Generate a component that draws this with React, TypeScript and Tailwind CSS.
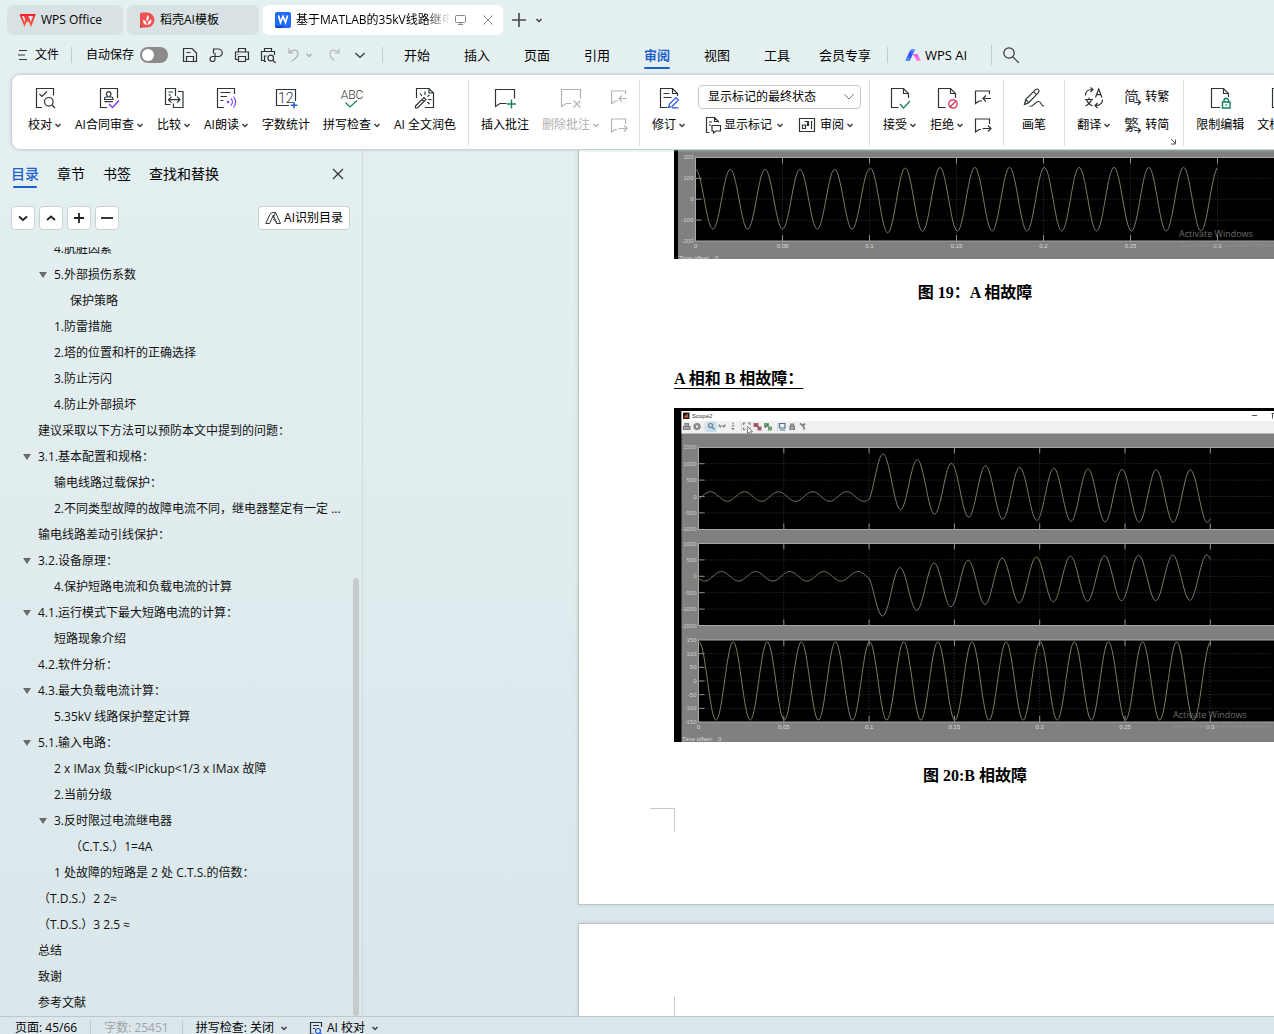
import type { ReactNode } from "react";

type Kids = { children?: ReactNode };

const INK = "#2f3437";
const PALE = "#b4b4b4";

function Ico({ size = 24, color = INK, children }: Kids & { size?: number; color?: string }) {
  return (
    <svg
      width={size}
      height={size}
      viewBox={`0 0 ${size} ${size}`}
      fill="none"
      stroke={color}
      strokeWidth={1.2}
      className="block shrink-0"
      aria-hidden="true"
    >
      {children}
    </svg>
  );
}

function Chevron({ color = "#3a3f42" }: { color?: string }) {
  return (
    <svg width="8" height="8" viewBox="0 0 8 8" fill="none" stroke={color} strokeWidth="1.5" className="ml-0.5 shrink-0" aria-hidden="true">
      <path d="M1.5 3L4 5.500L6.500 3" />
    </svg>
  );
}

/* ---------- ribbon icons ---------- */

const ProofIcon = () => (
  <Ico>
    <path d="M9 21.500H3.500V2.500H20.500V9.500M6.500 8l2.500 2.500 5-5" />
    <circle cx="15.800" cy="15.800" r="4.300" />
    <path d="M19 19l3 3" />
  </Ico>
);
const ContractIcon = () => (
  <Ico>
    <path d="M10 21.500H3.500V2.500H20.500V12" />
    <path d="M10.600 11c0-1.400-1.200-1.800-1.200-3.100a2.300 2.300 0 014.600 0c0 1.300-1.200 1.700-1.200 3.100M7.500 13.500v-1c0-.9.600-1.500 1.500-1.500h5.400c.9 0 1.500.6 1.500 1.500v1zM7.500 15.700h8.400" />
    <path d="M12 18l3.500 3.500 6.500-7" stroke="#7a3ff2" strokeWidth={1.500} />
  </Ico>
);
const CompareIcon = () => (
  <Ico>
    <path d="M8.500 18.500H3.500V2.500H13.500V10M6.500 6h4.500M6.500 9h2.500M16 5.500H21V21.500H11.500V17.500" />
    <path d="M6.500 13.700h11.500M9.500 10.700l-3 3 3 3M15 10.700l3 3-3 3" />
  </Ico>
);
const ReadIcon = () => (
  <Ico>
    <path d="M10 21.500H3.500V2.500H20.500V8M6.500 6.500h10M6.500 10.500h6.500M6.500 14.500h3" />
    <circle cx="14" cy="16" r="1.300" fill="#7a3ff2" stroke="none" />
    <path d="M17 12.500c1.800 2 1.800 5 0 7M19.500 10.500c2.600 3.300 2.600 7.700 0 11" stroke="#7a3ff2" />
  </Ico>
);
const CountIcon = () => (
  <Ico>
    <path d="M15 19.500H2.500V3.500H21.500V15" />
    <text x="11.800" y="16.500" fontSize="14" textAnchor="middle" fill={INK} stroke="none" fontWeight="300" fontFamily="Roboto, sans-serif">12</text>
    <path d="M20 16v6.500M16.800 19.200h6.500" stroke="#2357d8" strokeWidth={1.400} />
  </Ico>
);
const SpellIcon = () => (
  <Ico>
    <text x="12" y="12.500" fontSize="12" textAnchor="middle" fill={INK} stroke="none" fontWeight="300" fontFamily="Roboto, sans-serif">ABC</text>
    <path d="M5.500 16.500l4.500 4.500 7-6.500" stroke="#128060" />
  </Ico>
);
const PolishIcon = () => (
  <Ico>
    <path d="M3.500 12V2.500H16L20.500 7V21.500H12M16 2.500V7H20.500" />
    <path d="M2.500 20l8.500-8.500 2 2-8.500 8.500h-2zM9 13.500l2 2M12 5.500v3.500M7 7.500l2 2.500M16.500 9l-2 1.500M15 13.500h3.500M14.500 16l2 2" />
  </Ico>
);
const AddCommentIcon = () => (
  <Ico>
    <path d="M13.500 17.500H7l-4.500 3V3.500H21.500V12.500" />
    <path d="M18.500 13.500v9M14 18h9" stroke="#128060" strokeWidth={1.400} />
  </Ico>
);
const DeleteCommentIcon = () => (
  <Ico color={PALE}>
    <path d="M12.500 17.500H7l-4.500 3V3.500H21.500V12.500M14.500 14.500l7 7M21.500 14.500l-7 7" />
  </Ico>
);
const PrevIcon = ({ color = INK }: { color?: string }) => (
  <Ico size={18} color={color}>
    <path d="M8 13H5l-3.500 2.500V3H15.500V6M17 10.500H9M12 7.500l-3 3 3 3" />
  </Ico>
);
const NextIcon = ({ color = INK }: { color?: string }) => (
  <Ico size={18} color={color}>
    <path d="M7 13.500H5l-3.500 2.500V3H15.500V8M8.500 12.500H17M14 9.500l3 3-3 3" />
  </Ico>
);
const ReviseIcon = () => (
  <Ico>
    <path d="M10.500 21.500H3.500V2.500H15.500L20.500 7.500V10M15.500 2.500V7.500H20.500M6.500 7.500h6M6.500 11.500h8" />
    <path d="M11.500 21.500l1-3.500 6.500-6.500 2.500 2.500-6.500 6.500zM15 21.800h6.500" stroke="#2357d8" />
  </Ico>
);
const MarkupIcon = () => (
  <Ico size={18}>
    <path d="M5.500 16.500H2.500V1.500H10.500L14.500 5.500V6.500M10.500 1.500V5.500H14M5 6h3M5 9h2M8 9.500h8.500v5.500h-4.500l-2.500 2v-2H8z" />
  </Ico>
);
const PaneIcon = () => (
  <Ico size={18}>
    <path d="M1.500 2.500h15v13h-15zM13.500 5v8M4.500 9h3v3.500h-3zM9.500 5.500V9M6.500 5.500h4v4h-2" />
  </Ico>
);
const AcceptIcon = () => (
  <Ico>
    <path d="M10.500 21.500H3.500V2.500H15.500L20.500 7.500V12M15.500 2.500V7.500H20.500" />
    <path d="M12 18l3.500 4 6.500-7" stroke="#128060" />
  </Ico>
);
const RejectIcon = () => (
  <Ico>
    <path d="M10.500 21.500H3.500V2.500H15.500L20.500 7.500V12M15.500 2.500V7.500H20.500" />
    <path d="M15 21l6-6M22.200 18a4.200 4.200 0 11-8.400 0a4.200 4.200 0 018.400 0z" stroke="#cf2850" />
  </Ico>
);
const PenIcon = () => (
  <Ico>
    <path d="M2.500 18.500l1.200-5L13.500 3.700a2 2 0 012.900 2.900L6.700 16.700zM3.700 13.500l3 3.200M11.500 5.700l3 3M7.500 20.500c5 0 5.500-5 9-5s1.500 4.500 5.500 4.500" />
  </Ico>
);
const TranslateIcon = () => (
  <Ico>
    <path d="M3.500 9.500c0-4 2.500-6 7-6M8.500 1.500l2.500 2-2.500 2.500M20.500 13.500c0 4-2.500 6-7 6M15.500 17l-2.500 2.500 2.500 2.500" />
    <path d="M13.500 11.500l3.200-8.500 3.200 8.500M14.600 8.700h4.200M3 13.500h8M7 11.500v2M9.500 13.500c-1 3-3 5-6 6.500M4.500 13.500c1 3 3 5 6 6.500" />
  </Ico>
);
const GlyphIcon = ({ glyph }: { glyph: string }) => (
  <Ico size={18}>
    <text x="0" y="14" fontSize="15" fill={INK} stroke="none" fontFamily='"Noto Sans CJK SC", sans-serif'>{glyph}</text>
    <path d="M10.500 14.500H16.500M14 12l2.500 2.500-2.500 2.500" stroke="white" strokeWidth={3.500} />
    <path d="M10.500 14.500H16.500M14 12l2.500 2.500-2.500 2.500" />
  </Ico>
);
const LockIcon = () => (
  <Ico>
    <path d="M12 21.500H3.500V2.500H15.500L20.500 7.500V11M15.500 2.500V7.500H20.500" />
    <path d="M14.500 16h7.500v6h-7.500zM16 16v-1.500a2.200 2.200 0 014.500 0v1.500M18.200 18.300v1.500" stroke="#128060" strokeWidth={1.400} />
  </Ico>
);
const DocIcon = () => (
  <Ico>
    <path d="M10.500 21.500H3.500V2.500H15.500L20.500 7.500V12M15.500 2.500V7.500H20.500" />
  </Ico>
);

/* ---------- ribbon parts ---------- */

function Big({ icon, label, menu, disabled }: { icon: ReactNode; label: string; menu?: boolean; disabled?: boolean }) {
  return (
    <button type="button" disabled={disabled} className="flex shrink-0 flex-col items-center gap-[7px] text-black disabled:text-[#b0b0b0]">
      {icon}
      <span className="flex items-center whitespace-nowrap leading-4">
        {label}
        {menu && <Chevron color={disabled ? PALE : undefined} />}
      </span>
    </button>
  );
}

const Sep = () => <div className="-mx-px -mt-1.5 h-[66px] w-px shrink-0 bg-[#d9dcdd]" />;

const Stack = ({ children }: Kids) => <div className="-ml-[3px] -mr-px flex shrink-0 flex-col gap-2.5 pt-0.5">{children}</div>;

function IconButton({ label, disabled, children }: Kids & { label: string; disabled?: boolean }) {
  return (
    <button type="button" aria-label={label} disabled={disabled} className="flex shrink-0 items-center justify-center">
      {children}
    </button>
  );
}

function Ribbon() {
  return (
    <div className="relative z-10 mb-px ml-3 flex h-[74px] shrink-0 items-start gap-[13px] overflow-hidden rounded-l-lg bg-white pl-4 pt-[11px] shadow-[0_0_3px_1px_#b9c7c9]">
      <Big icon={<ProofIcon />} label="校对" menu />
      <Big icon={<ContractIcon />} label="AI合同审查" menu />
      <Big icon={<CompareIcon />} label="比较" menu />
      <Big icon={<ReadIcon />} label="AI朗读" menu />
      <Big icon={<CountIcon />} label="字数统计" />
      <Big icon={<SpellIcon />} label="拼写检查" menu />
      <Big icon={<PolishIcon />} label="AI 全文润色" />
      <Sep />
      <Big icon={<AddCommentIcon />} label="插入批注" />
      <Big icon={<DeleteCommentIcon />} label="删除批注" menu disabled />
      <Stack>
        <IconButton label="上一条批注" disabled><PrevIcon color={PALE} /></IconButton>
        <IconButton label="下一条批注" disabled><NextIcon color={PALE} /></IconButton>
      </Stack>
      <Sep />
      <Big icon={<ReviseIcon />} label="修订" menu />
      <div className="-ml-px -mt-px flex shrink-0 flex-col gap-[7px]">
        <label className="relative flex">
          <span className="sr-only">显示状态</span>
          <select className="h-6 w-[163px] appearance-none rounded border border-[#c4c8ca] bg-white pl-[9px] text-xs leading-4 text-black">
            <option>显示标记的最终状态</option>
          </select>
          <svg width="12" height="8" viewBox="0 0 12 8" fill="none" stroke="#6b7072" className="pointer-events-none absolute right-1.5 top-2" aria-hidden="true">
            <path d="M1.500 1.500L6 6L10.500 1.500" />
          </svg>
        </label>
        <div className="flex gap-3.5 pl-1.5">
          <button type="button" className="flex items-center gap-0.5 leading-[18px]">
            <MarkupIcon />
            <span className="flex items-center">显示标记<span className="w-0.5" /><Chevron /></span>
          </button>
          <button type="button" className="flex items-center gap-1 leading-[18px]">
            <PaneIcon />
            <span className="flex items-center">审阅<Chevron /></span>
          </button>
        </div>
      </div>
      <div className="-ml-1"><Sep /></div>
      <Big icon={<AcceptIcon />} label="接受" menu />
      <Big icon={<RejectIcon />} label="拒绝" menu />
      <Stack>
        <IconButton label="上一条修订"><PrevIcon /></IconButton>
        <IconButton label="下一条修订"><NextIcon /></IconButton>
      </Stack>
      <Sep />
      <div className="px-1.5"><Big icon={<PenIcon />} label="画笔" /></div>
      <Sep />
      <Big icon={<TranslateIcon />} label="翻译" menu />
      <div className="flex shrink-0 flex-col gap-2.5 pt-0.5">
        <button type="button" className="flex items-center gap-[3px] leading-[18px]"><GlyphIcon glyph="简" />转繁</button>
        <button type="button" className="flex items-center gap-[3px] leading-[18px]"><GlyphIcon glyph="繁" />转简</button>
      </div>
      <div className="-ml-3 -mr-1.5 self-end pb-1">
        <IconButton label="更多选项">
          <svg width="7" height="7" viewBox="0 0 7 7" fill="none" stroke="#555" aria-hidden="true"><path d="M1 1l4.500 4.500M5.500 1.500v4.500H1" /></svg>
        </IconButton>
      </div>
      <Sep />
      <Big icon={<LockIcon />} label="限制编辑" />
      <Big icon={<DocIcon />} label="文档权限" />
    </div>
  );
}

/* ---------- title bar and menu ---------- */

function TitleBar() {
  return (
    <div className="flex h-[39px] shrink-0 items-start gap-1 pl-[7px] pt-[5px]">
      <button type="button" className="flex h-[30px] w-[116px] items-center gap-[5px] rounded-md bg-[#d8e2e4] pl-3">
        <svg width="17" height="16" viewBox="0 0 17 16" fill="none" aria-hidden="true">
          <defs>
            <linearGradient id="wpsRed" x1="0" y1="0" x2="0" y2="1"><stop stopColor="#f5222d" /><stop offset="1" stopColor="#fb5a3c" /></linearGradient>
          </defs>
          <path d="M1 3H15.500L12 12.500L8.500 5L5.500 12.500L1.500 3M5.500 3L8.500 9.500" stroke="url(#wpsRed)" strokeWidth="1.900" />
        </svg>
        WPS Office
      </button>
      <button type="button" className="flex h-[30px] w-[132px] items-center gap-[5px] rounded-md bg-[#d8e2e4] pl-3">
        <svg width="16" height="16" viewBox="0 0 16 16" aria-hidden="true">
          <path d="M1 2q0-1.500 1.500-1.500H8a7.500 7.500 0 010 15H1z" fill="#f05252" />
          <path d="M1 12.500L4 15.500H1z" fill="#c93636" />
          <path d="M8 13c-3-.5-4-2-4-5 2 0 3.500 1.500 4 5zM7.500 8c-.3-2 .5-4 1.500-5 1.200 1.500 1.200 4-.5 6zM8.800 13c0-3 1.200-5 3.700-5.500 0 3-1 5-3.700 5.500z" fill="white" />
        </svg>
        稻壳AI模板
      </button>
      <div className="flex h-[30px] w-60 items-center rounded-md bg-white pl-3">
        <svg width="16" height="16" viewBox="0 0 16 16" aria-hidden="true">
          <rect width="16" height="16" rx="2" fill="#1f6cf9" />
          <path d="M0 14h9l-2 2H2a2 2 0 01-2-2z" fill="#0b47bd" />
          <path d="M3.500 3.500L5.500 10.500L8 4.500L10.500 10.500L12.500 3.500" stroke="white" strokeWidth="1.700" fill="none" />
        </svg>
        <span className="ml-[5px] w-[154px] overflow-hidden whitespace-nowrap [mask-image:linear-gradient(90deg,black_84%,transparent)]">基于MATLAB的35kV线路继电保护</span>
        <svg width="14" height="12" viewBox="0 0 14 12" fill="none" stroke="#80868a" className="ml-1 shrink-0" aria-hidden="true">
          <rect x="1.500" y="1.500" width="10" height="7" rx="1" /><path d="M4 10.500h5M6.500 8.500v2" />
        </svg>
        <button type="button" aria-label="关闭标签" className="ml-3.5">
          <svg width="12" height="12" viewBox="0 0 12 12" stroke="#80868a" aria-hidden="true"><path d="M1.500 1.500l9 9M10.500 1.500l-9 9" /></svg>
        </button>
      </div>
      <button type="button" aria-label="新建标签" className="ml-1 flex h-[30px] items-center">
        <svg width="16" height="16" viewBox="0 0 16 16" stroke="#44494b" strokeWidth="1.600" aria-hidden="true"><path d="M8 1v14M1 8h14" /></svg>
      </button>
      <button type="button" aria-label="标签列表" className="ml-0.5 flex h-[30px] items-center">
        <Chevron />
      </button>
    </div>
  );
}

const MENUS = ["开始", "插入", "页面", "引用", "审阅", "视图", "工具"];

function QuickIcon({ label, color, children }: Kids & { label: string; color?: string }) {
  return (
    <button type="button" aria-label={label} className="flex w-[26px] shrink-0 justify-center">
      <Ico size={16} color={color}>{children}</Ico>
    </button>
  );
}

function MenuBar() {
  return (
    <div className="flex h-9 shrink-0 items-center whitespace-nowrap pb-[5px] pl-[18px]">
      <button type="button" className="flex items-center gap-2">
        <svg width="9" height="12" viewBox="0 0 9 12" stroke={INK} aria-hidden="true"><path d="M1 1.500h8M0 6h7M1 10.500h8" /></svg>
        文件
      </button>
      <div className="mx-3 h-4 w-px bg-[#c2cccd]" />
      <label className="ml-0.5 flex items-center gap-1.5">
        自动保存
        <input
          type="checkbox"
          className="h-4 w-7 appearance-none rounded-full bg-[#8b8b8b] p-0.5 before:block before:size-3 before:rounded-full before:bg-white"
        />
      </label>
      <div className="ml-[9px] flex items-center">
        <QuickIcon label="保存"><path d="M1.500 1.500H10L14.500 6V14.500H1.500zM4.500 5.500h4M4.500 14.500V9.500h7V14.500" /></QuickIcon>
        <QuickIcon label="导出PDF"><path d="M5.500 6.500V2h5a3.700 3.700 0 010 7.500H4.500a2.500 2.500 0 102.500 2.500V6" /></QuickIcon>
        <QuickIcon label="打印"><path d="M4.500 5V1.500H11.500V5M4 12.500H1.500V5H14.500V12.500H12M4.500 9.500H11.500V14.500H4.500zM3.500 7.500h1" /></QuickIcon>
        <QuickIcon label="打印预览"><path d="M4.500 4.500V1.500H11.500V4.500M4.500 13.500H1.500V4.500H14.500V8M6 14.500H4.500V9H6.500M13.500 11a2.800 2.800 0 11-5.600 0a2.800 2.800 0 015.600 0zM12.700 13l3 3" /></QuickIcon>
        <QuickIcon label="撤销" color="#a9b1b3"><path d="M3 1.500V6H7.500M3 6c3-4 9-4 9 .5 0 4-3 5-6.500 8" /></QuickIcon>
        <span className="-ml-1"><Chevron color="#a9b1b3" /></span>
        <span className="ml-2 flex"><QuickIcon label="恢复" color="#b5bdbf"><path d="M13 1.500V6H8.500M13 6c-3-4-9-4-9 .5 0 4 1.500 4.500 4 7" /></QuickIcon></span>
        <QuickIcon label="更多命令"><path d="M3.500 6L8 10.500L12.500 6" /></QuickIcon>
      </div>
      <div className="ml-[9px] h-4 w-px bg-[#c2cccd]" />
      <nav className="ml-1 flex items-center text-[13px] leading-[18px]">
        {MENUS.map((m) => (
          <button
            key={m}
            type="button"
            className={
              m === "审阅"
                ? "relative w-[60px] py-1 font-bold text-[#1f5fc9] after:absolute after:-bottom-px after:left-[17px] after:h-0.5 after:w-[26px] after:rounded after:bg-[#1f5fc9]"
                : "w-[60px] py-1"
            }
          >
            {m}
          </button>
        ))}
        <button type="button" className="w-[76px]">会员专享</button>
        <div className="ml-1 h-4 w-px bg-[#c2cccd]" />
        <button type="button" className="ml-[17px] flex items-center gap-1">
          <svg width="16" height="12" viewBox="0 0 16 12" aria-hidden="true">
            <defs>
              <linearGradient id="aiBlue" x1="0" y1="1" x2="1" y2="0"><stop stopColor="#59b5ff" /><stop offset=".5" stopColor="#3345f5" /><stop offset="1" stopColor="#6ab8ff" /></linearGradient>
              <linearGradient id="aiPink" x1="0" y1="0" x2="1" y2="1"><stop stopColor="#e83ef0" /><stop offset="1" stopColor="#ff9ad0" /></linearGradient>
            </defs>
            <path d="M0 12L5 1.500Q5.700 0 7.500 0H10.500L4.500 12z" fill="url(#aiBlue)" />
            <path d="M8 5h4.500L16 12h-4z" fill="url(#aiPink)" />
          </svg>
          WPS AI
        </button>
        <div className="ml-6 h-5 w-px bg-[#c2cccd]" />
        <button type="button" aria-label="搜索" className="ml-2.5">
          <Ico size={18}><circle cx="7" cy="7" r="5.200" /><path d="M10.800 10.800l6 6" /></Ico>
        </button>
      </nav>
    </div>
  );
}

/* ---------- sidebar ---------- */

type Entry = [level: 0 | 1 | 2, text: string, open?: boolean];

const OUTLINE: Entry[] = [
  [1, "4.肮脏因素"],
  [1, "5.外部损伤系数", true],
  [2, "保护策略"],
  [1, "1.防雷措施"],
  [1, "2.塔的位置和杆的正确选择"],
  [1, "3.防止污闪"],
  [1, "4.防止外部损坏"],
  [0, "建议采取以下方法可以预防本文中提到的问题："],
  [0, "3.1.基本配置和规格：", true],
  [1, "输电线路过载保护："],
  [1, "2.不同类型故障的故障电流不同，继电器整定有一定 ..."],
  [0, "输电线路差动引线保护："],
  [0, "3.2.设备原理：", true],
  [1, "4.保护短路电流和负载电流的计算"],
  [0, "4.1.运行模式下最大短路电流的计算：", true],
  [1, "短路现象介绍"],
  [0, "4.2.软件分析："],
  [0, "4.3.最大负载电流计算：", true],
  [1, "5.35kV 线路保护整定计算"],
  [0, "5.1.输入电路：", true],
  [1, "2 x IMax 负载<IPickup<1/3 x IMax 故障"],
  [1, "2.当前分级"],
  [1, "3.反时限过电流继电器", true],
  [2, "（C.T.S.）1=4A"],
  [1, "1 处故障的短路是 2 处 C.T.S.的倍数："],
  [0, "（T.D.S.）2 2≈"],
  [0, "（T.D.S.）3 2.5 ≈"],
  [0, "总结"],
  [0, "致谢"],
  [0, "参考文献"],
];

const INDENT = ["pl-5", "pl-9", "pl-[52px]"];

const TOOLS: [string, string][] = [
  ["展开", "M3 5.500L7 9L11 5.500"],
  ["折叠", "M3 9L7 5.500L11 9"],
  ["增加级别", "M7 2v10M2 7h10"],
  ["减少级别", "M1 7h12"],
];

function Sidebar() {
  return (
    <aside className="flex w-[363px] shrink-0 flex-col border-r border-[#d3d9da]">
      <div className="flex h-12 shrink-0 items-center text-sm leading-5">
        <div className="flex gap-[18px] pl-[11px]">
          <button type="button" className="relative font-medium text-[#1f5fc9] after:absolute after:-bottom-1 after:left-0.5 after:h-0.5 after:w-6 after:rounded after:bg-[#1f5fc9]">目录</button>
          <button type="button">章节</button>
          <button type="button">书签</button>
          <button type="button">查找和替换</button>
        </div>
        <button type="button" aria-label="关闭" className="ml-auto mr-[18px]">
          <svg width="12" height="12" viewBox="0 0 12 12" stroke={INK} strokeWidth="1.200" aria-hidden="true"><path d="M1 1l10 10M11 1L1 11" /></svg>
        </button>
      </div>
      <div className="mt-2 flex shrink-0 gap-1 pl-[11px] pr-3">
        {TOOLS.map(([label, d]) => (
          <button key={label} type="button" aria-label={label} className="flex size-6 items-center justify-center rounded border border-[#c9d1d3] bg-white">
            <svg width="14" height="14" viewBox="0 0 14 14" fill="none" stroke="#222" strokeWidth="1.800" aria-hidden="true"><path d={d} /></svg>
          </button>
        ))}
        <button type="button" className="ml-auto flex h-6 items-center gap-[3px] rounded border border-[#c9d1d3] bg-white px-1.5 leading-4">
          <Ico size={16}><path d="M.8 13.500L5 4.500Q5.800 2.500 8 2.500H10.500L15.500 13.500H12L8 5M4.500 13.500H.8M4.500 13.500L8.500 5M8 9.500c1.500 0 3 1 3.500 4M10.500 2.500L8 8" strokeWidth={1} /></Ico>
          AI识别目录
        </button>
      </div>
      <div className="mt-[17px] flex min-h-0 flex-1">
        <ul className="flex min-w-0 flex-1 flex-col justify-end overflow-hidden">
          {OUTLINE.map(([level, text, open]) => (
            <li key={text} className={`flex h-[26px] shrink-0 items-center ${INDENT[level]}`}>
              <span className="mr-1 flex w-3.5 shrink-0 justify-center">
                {open && (
                  <svg width="8" height="6" viewBox="0 0 8 6" fill="#666c6e" aria-hidden="true"><path d="M0 0H8L4 6z" /></svg>
                )}
              </span>
              <button type="button" className="whitespace-nowrap leading-4 text-[#111]">{text}</button>
            </li>
          ))}
        </ul>
        <div className="mr-[3px] flex w-1.5 shrink-0 flex-col justify-end">
          <div className="h-[57%] rounded-full bg-[#c3cbce]" />
        </div>
      </div>
    </aside>
  );
}

/* ---------- oscilloscope figures ---------- */

type PlotSpec = {
  top: number;
  bottom: number;
  zero: number;
  perUnit: number;
  ticks: number[];
  f: (t: number) => number;
};

const wave = (t: number, peak: number) => Math.cos((2 * Math.PI * (t - peak)) / 0.02);
const decay = (t: number) => Math.exp(-(t - 0.108) / 0.047);

function Plot({ spec, x0, step }: { spec: PlotSpec; x0: number; step: number }) {
  const { top, bottom, zero, perUnit, ticks, f } = spec;
  const pts: string[] = [];
  for (let i = 0; i <= 600; i++) {
    const t = (i / 600) * 0.3;
    pts.push(`${(x0 + (t / 0.05) * step).toFixed(1)},${(zero - f(t) * perUnit).toFixed(1)}`);
  }
  return (
    <g>
      <rect x={x0} y={top} width={620} height={bottom - top} fill="#000" stroke="#a8a8a8" strokeWidth="1" />
      {ticks.map((v, i) => {
        const y = zero - v * perUnit;
        const inner = i > 0 && i < ticks.length - 1;
        return (
          <g key={v}>
            {inner && <path d={`M${x0} ${y}H620`} stroke="#484848" strokeWidth=".8" strokeDasharray="1 2" />}
            {inner && <path d={`M${x0} ${y}h6`} stroke="#b0b0b0" strokeWidth=".8" />}
            <text x={x0 - 2} y={y + 2} textAnchor="end" fontSize="6" fill="#d0d0d0">{v}</text>
          </g>
        );
      })}
      {[1, 2, 3, 4, 5, 6].map((k) => {
        const x = x0 + k * step;
        return (
          <g key={k}>
            <path d={`M${x} ${top}V${bottom}`} stroke="#484848" strokeWidth=".8" strokeDasharray="1 2" />
            <path d={`M${x} ${top}v6M${x} ${bottom}v-6`} stroke="#b0b0b0" strokeWidth=".8" />
          </g>
        );
      })}
      <polyline points={pts.join(" ")} fill="none" stroke="#7c7c66" strokeWidth="1" />
    </g>
  );
}

function TimeAxis({ x0, step, y }: { x0: number; step: number; y: number }) {
  return (
    <g fontSize="6" fill="#dcdcdc" textAnchor="middle">
      {["0", "0.05", "0.1", "0.15", "0.2", "0.25", "0.3"].map((s, k) => (
        <text key={s} x={x0 + k * step} y={y}>{s}</text>
      ))}
    </g>
  );
}

function Watermark({ x, y }: { x: number; y: number }) {
  return (
    <g fontFamily='"Open Sans", sans-serif'>
      <text x={x} y={y} fontSize="9" fill="#6c6c6c">Activate Windows</text>
      <text x={x} y={y + 10} fontSize="6" fill="#8f8f8f">Go to Settings to activate Windows.</text>
    </g>
  );
}

const SCOPE_A: PlotSpec = {
  top: 7.5, bottom: 91, zero: 49.2, perUnit: 0.209, ticks: [200, 100, 0, -100, -200],
  f: (t) => (t < 0.1 ? 143 * wave(t, 0) : 152 * wave(t, 0.0005) - 9 * Math.exp(-Math.abs(t - 0.11) / 0.01)),
};

const SCOPE_AB: PlotSpec[] = [
  {
    top: 39.5, bottom: 121.5, zero: 88.5, perUnit: 0.0328, ticks: [1500, 1000, 500, 0, -500, -1000],
    f: (t) => (t < 0.1 ? 145 * wave(t, 0.0069) : 800 * wave(t, 0.1083) + 500 * decay(t)),
  },
  {
    top: 135.5, bottom: 217.5, zero: 168.3, perUnit: 0.0328, ticks: [1000, 500, 0, -500, -1000, -1500],
    f: (t) => (t < 0.1 ? 145 * wave(t, 0.0135) : 690 * wave(t, 0.118) - 30 - 490 * decay(t)),
  },
  {
    top: 232, bottom: 314, zero: 273, perUnit: 0.2735, ticks: [150, 100, 50, 0, -50, -100, -150],
    f: (t) => 143 * wave(t, 0.0003),
  },
];

function FigureA() {
  return (
    <svg width="602" height="109" viewBox="0 0 602 109" fontFamily='"Liberation Sans", sans-serif' className="block font-normal" role="img" aria-label="A 相故障波形">
      <rect width="602" height="109" fill="#808080" />
      <rect width="4" height="109" fill="#000" />
      <Plot spec={SCOPE_A} x0={21.500} step={87} />
      <TimeAxis x0={21.500} step={87} y={97.500} />
      <text x="5" y="110" fontSize="6" fill="#dcdcdc">Time offset:&#160;&#160; 0</text>
      <Watermark x={505} y={87} />
    </svg>
  );
}

function FigureAB() {
  return (
    <svg width="602" height="334" viewBox="0 0 602 334" fontFamily='"Liberation Sans", sans-serif' className="block font-normal" role="img" aria-label="A 相和 B 相故障波形">
      <rect width="602" height="334" fill="#000" />
      <rect x="7.500" y="3" width="595" height="331" fill="#808080" />
      <rect x="7.500" y="3" width="595" height="10" fill="#fff" />
      <rect x="7.500" y="13" width="595" height="12" fill="#f0f0f0" />
      <path d="M7.500 25.500H602" stroke="#b8b8b8" />
      <rect x="9" y="4.500" width="6.500" height="6.500" fill="#23211f" />
      <path d="M10 8.500l2.500-1.500 1-1.500 1 5-1.500-1.500-1.500 1z" fill="#d9582c" />
      <text x="18" y="10" fontSize="6" fill="#333">Scope2</text>
      <path d="M578 7.500h5M597.500 5.500h4.500M598.500 5.500v5" stroke="#555" fill="none" />
      <path d="M31 14.500v9M67.500 14.500v9M103.500 14.500v9" stroke="#c9c9c9" strokeWidth=".8" />
      <rect x="32.500" y="13.500" width="10" height="10.500" fill="#bedcf2" />
      <g fill="none" stroke="#7d8082" strokeWidth="1.200">
        <path d="M9.500 18.500h6.500v3h-6.500zM11 18v-2.500h3.500v2.500" fill="#a5a8aa" />
        <circle cx="23" cy="18.500" r="1.800" /><circle cx="23" cy="18.500" r="3" />
        <circle cx="36.500" cy="17.500" r="2" /><path d="M38 19l2.500 2.500" />
        <path d="M44.500 18h7M45 16.500l1.500 3M51 16.500l-1.500 3M59 14.500v2M59 20v2M57.500 18h3M57.500 20.500h2.500" />
        <path d="M69.500 17v-2h2M74 15h2v2M76 19.500v2h-2M71.500 21.500h-2v-2" />
        <path d="M105.500 15.500h5.500v4.500h-5.500zM106 22h5" stroke="#4c7088" />
        <path d="M116 18h4.500v3.500h-4.500zM117 18v-2h2.500v2" fill="#a5a8aa" />
        <path d="M126 15.500l3 2 2-2M129 17.500l1.500 4" strokeWidth="1.800" />
      </g>
      <path d="M79.500 15h5v4h-5zM83.500 18.500h4v4h-4z" fill="#b05c6a" /><path d="M81 16l5 5" stroke="#555" />
      <path d="M90 15h5v4h-5zM94 18.500h4v4h-4z" fill="#6aa571" /><path d="M91 20l3-4" stroke="#555" />
      <path d="M73.500 18.500v7l1.700-1.500 1.200 2.500 1.200-.6-1.100-2.300h2z" fill="#fff" stroke="#444" strokeWidth=".6" />
      {SCOPE_AB.map((s) => (
        <Plot key={s.top} spec={s} x0={24.500} step={85.300} />
      ))}
      <TimeAxis x0={24.500} step={85.300} y={320.500} />
      <text x="8" y="333" fontSize="6" fill="#dcdcdc">Time offset:&#160;&#160; 0</text>
      <Watermark x={499} y={309.500} />
    </svg>
  );
}

/* ---------- document ---------- */

function DocumentView() {
  return (
    <main className="flex min-w-0 flex-1 flex-col overflow-hidden pl-[215px] font-['Liberation_Serif','Noto_Sans_CJK_SC',serif] text-base font-bold leading-7 text-black">
      <article className="w-[794px] shrink-0 border border-t-0 border-[#c0c4c5] bg-white px-[95px] pb-[72px] shadow-[0_0_4px_#c5d0d2]">
        <FigureA />
        <p className="mt-5 text-center">图 19：A 相故障</p>
        <h2 className="mt-[58px] underline underline-offset-4">A 相和 B 相故障：</h2>
        <div className="mt-[15px]">
          <FigureAB />
        </div>
        <p className="mt-5 text-center">图 20:B 相故障</p>
        <div className="-ml-6 mt-[18px] h-6 w-[25px] border-r border-t border-[#c8c8c8]" />
      </article>
      <article className="mt-[18px] w-[794px] flex-1 border border-b-0 border-[#c0c4c5] bg-white px-[95px] pt-[72px] shadow-[0_0_4px_#c5d0d2]">
        <div className="-ml-6 h-6 w-[25px] border-r border-[#c8c8c8]" />
      </article>
    </main>
  );
}

function StatusBar() {
  return (
    <footer className="relative z-10 h-[18px] shrink-0 overflow-hidden border-t border-[#bccacd] bg-[#dbe7eb]">
      <div className="flex h-[22px] items-center whitespace-nowrap pl-[15px] leading-4">
        <button type="button">页面: 45/66</button>
        <div className="mx-[13px] h-4 w-px bg-[#bfcacd]" />
        <button type="button" className="text-[#9ba5a8]">字数: 25451</button>
        <div className="mx-[13px] h-4 w-px bg-[#bfcacd]" />
        <button type="button" className="flex items-center gap-1">拼写检查: 关闭<Chevron /></button>
        <button type="button" className="ml-[21px] flex items-center gap-1">
          <Ico size={14}>
            <path d="M5 13H1.500V1.500H12.500V6M4 4.500h6M4 7.500h2" />
            <path d="M11.500 10a2.500 2.500 0 11-5 0a2.500 2.500 0 015 0zM11 12l2.500 2" stroke="#2357d8" />
          </Ico>
          AI 校对<Chevron />
        </button>
      </div>
    </footer>
  );
}

export default function App() {
  return (
    <div className="flex h-screen flex-col overflow-hidden bg-linear-to-b from-[#e5f0f1] via-[#e0ecee] to-[#dae7eb] font-['Open_Sans','Noto_Sans_CJK_SC',sans-serif] text-xs text-black">
      <TitleBar />
      <MenuBar />
      <Ribbon />
      <div className="flex min-h-0 flex-1">
        <Sidebar />
        <DocumentView />
      </div>
      <StatusBar />
    </div>
  );
}
